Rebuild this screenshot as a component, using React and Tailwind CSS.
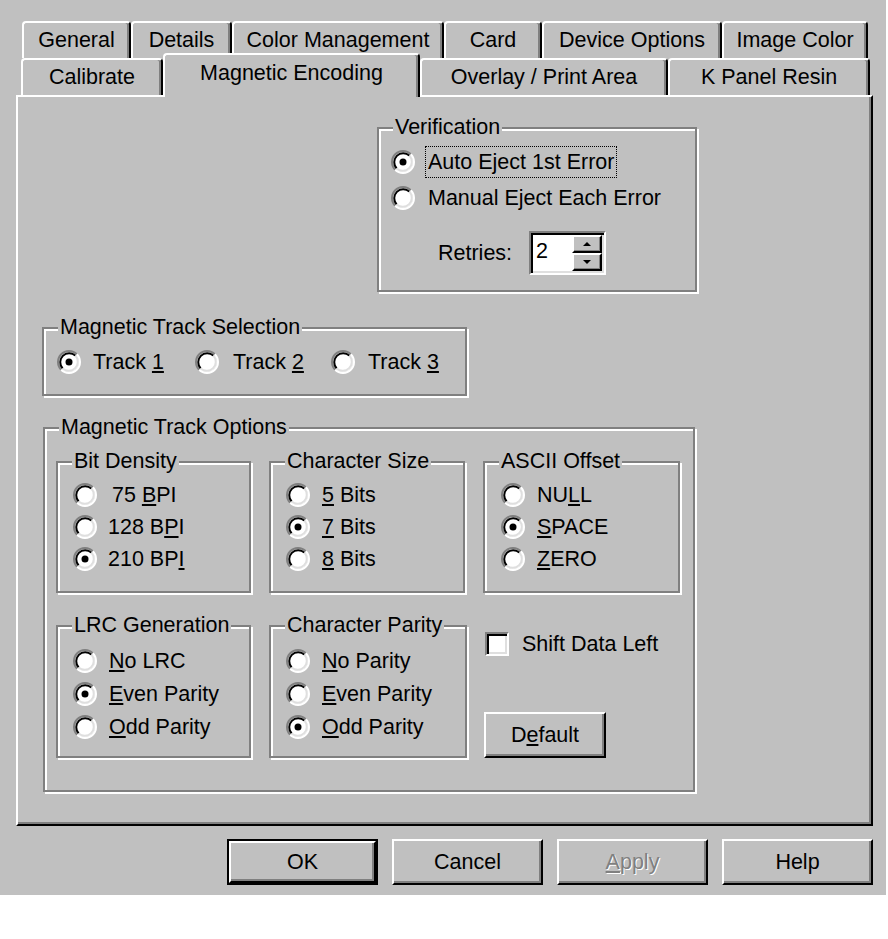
import React from 'react';

const row1 = [
  { label: 'General', w: 'w-[109px]' },
  { label: 'Details', w: 'w-[101px]' },
  { label: 'Color Management', w: 'w-[212px]' },
  { label: 'Card', w: 'w-[98px]' },
  { label: 'Device Options', w: 'w-[180px]' },
  { label: 'Image Color', w: 'w-[146px]' },
];

const row2 = [
  { label: 'Calibrate', w: 'w-[142px]' },
  { label: 'Magnetic Encoding', w: 'w-[257px]', selected: true },
  { label: 'Overlay / Print Area', w: 'w-[248px]' },
  { label: 'K Panel Resin', w: 'w-[202px]' },
];

const Radio = ({ checked }) => (
  <svg width="24" height="24" viewBox="0 0 24 24" className="shrink-0">
    <circle cx="12" cy="12" r="10" fill="#fff" />
    <path d="M4.22 19.78 A11 11 0 0 1 19.78 4.22" stroke="#808080" strokeWidth="2" fill="none" />
    <path d="M19.78 4.22 A11 11 0 0 1 4.22 19.78" stroke="#fff" strokeWidth="2" fill="none" />
    <path d="M5.64 18.36 A9 9 0 0 1 18.36 5.64" stroke="#000" strokeWidth="2" fill="none" />
    <path d="M18.36 5.64 A9 9 0 0 1 5.64 18.36" stroke="#dfdfdf" strokeWidth="2" fill="none" />
    {checked && <circle cx="12" cy="12" r="3.5" fill="#000" />}
  </svg>
);

const Option = ({ checked, children, className = 'h-[32px]', gap = 'gap-[11px]' }) => (
  <div className={`flex items-center ${gap} ${className}`}>
    <Radio checked={checked} />
    <span className="leading-[24px] whitespace-nowrap">{children}</span>
  </div>
);

const Group = ({ label, className = '', children }) => (
  <div className={`relative border-2 border-[#808080] shadow-[2px_2px_0_#fff,inset_2px_2px_0_#fff] ${className}`}>
    <span className="absolute -top-[14px] left-[14px] bg-[#c0c0c0] px-[2px] leading-[24px] whitespace-nowrap">
      {label}
    </span>
    {children}
  </div>
);

const Button = ({ children, className = '', isDefault }) => (
  <div className={`h-[46px] ${isDefault ? 'border-2 border-black' : ''} ${className}`}>
    <div className="w-full h-full flex items-center justify-center border-2 border-t-white border-l-white border-r-black border-b-black shadow-[inset_-2px_-2px_0_#808080]">
      {children}
    </div>
  </div>
);

const Tab = ({ label, w, selected }) =>
  selected ? (
    <div className={`${w} h-[44px] -mb-[2px] flex items-center justify-center pb-[6px] bg-[#c0c0c0] border-t-2 border-x-2 border-t-white border-l-white border-r-black rounded-t-[4px] shadow-[inset_-2px_0_0_#808080]`}>
      {label}
    </div>
  ) : (
    <div className={`${w} h-[37px] flex items-center justify-center bg-[#c0c0c0] border-t-2 border-x-2 border-t-white border-l-white border-r-black rounded-t-[4px] shadow-[inset_-2px_0_0_#808080]`}>
      {label}
    </div>
  );

const SpinArrow = ({ down }) => (
  <div className="flex-1 flex items-center justify-center bg-[#c0c0c0] border-2 border-t-white border-l-white border-r-black border-b-black shadow-[inset_-1px_-1px_0_#808080]">
    <svg width="8" height="4" viewBox="0 0 8 4">
      <path d={down ? 'M0 0 H8 L4 4 Z' : 'M0 4 H8 L4 0 Z'} fill="#000" />
    </svg>
  </div>
);

export default function App() {
  return (
    <div className="min-h-screen bg-white font-['Liberation_Sans',Arial,sans-serif] text-[21.5px] text-black">
      <div className="w-[886px] h-[895px] bg-[#c0c0c0] pt-[21px]">
        {/* back tab row */}
        <div className="flex ml-[22px]">
          {row1.map((t) => (
            <Tab key={t.label} {...t} />
          ))}
        </div>
        {/* front tab row */}
        <div className="relative z-10 flex items-end h-[37px] ml-[21px]">
          {row2.map((t) => (
            <Tab key={t.label} {...t} />
          ))}
        </div>

        {/* tab panel */}
        <div className="ml-[16px] w-[857px] h-[731px] border-2 border-t-white border-l-white border-r-black border-b-black shadow-[inset_-2px_-2px_0_#808080]">
          <Group label="Verification" className="ml-[359px] mt-[30px] w-[320px] h-[165px] pl-[12px] pt-[15px]">
            <div className="flex items-center gap-[10px] h-[36px]">
              <Radio checked />
              <span className="leading-[24px] px-[2px] py-[3px] border border-dotted border-black">Auto Eject 1st Error</span>
            </div>
            <div className="flex items-center gap-[10px] h-[36px]">
              <Radio />
              <span className="leading-[24px] px-[2px] border border-transparent">Manual Eject Each Error</span>
            </div>
            <div className="flex items-center mt-[15px] ml-[47px] gap-[17px]">
              <span>Retries:</span>
              <div className="flex w-[77px] h-[44px] bg-white border-2 border-t-[#808080] border-l-[#808080] border-b-white border-r-white shadow-[inset_2px_2px_0_#000,inset_-2px_-2px_0_#dfdfdf]">
                <span className="pl-[5px] pt-[6px] leading-[24px]">2</span>
                <div className="ml-auto flex flex-col w-[32px] py-[2px] pr-[2px]">
                  <SpinArrow />
                  <SpinArrow down />
                </div>
              </div>
            </div>
          </Group>

          <Group label="Magnetic Track Selection" className="ml-[24px] mt-[35px] w-[425px] h-[69px] pl-[13px] pt-[17px]">
            <div className="flex">
              <Option checked className="h-[32px] w-[138px]" gap="gap-[12px]">Track <u>1</u></Option>
              <Option className="h-[32px] w-[136px]" gap="gap-[14px]">Track <u>2</u></Option>
              <Option className="h-[32px]" gap="gap-[13px]">Track <u>3</u></Option>
            </div>
          </Group>

          <Group label="Magnetic Track Options" className="ml-[25px] mt-[31px] w-[652px] h-[365px] pl-[11px] pt-[32px]">
            <div className="flex gap-[18px]">
              <Group label="Bit Density" className="w-[195px] h-[132px] pl-[15px] pt-[16px]">
                <Option><span className="ml-[4px]">75 <u>B</u>PI</span></Option>
                <Option>128 B<u>P</u>I</Option>
                <Option checked>210 BP<u>I</u></Option>
              </Group>
              <Group label="Character Size" className="w-[196px] h-[132px] pl-[15px] pt-[16px]">
                <Option gap="gap-[12px]"><u>5</u> Bits</Option>
                <Option checked gap="gap-[12px]"><u>7</u> Bits</Option>
                <Option gap="gap-[12px]"><u>8</u> Bits</Option>
              </Group>
              <Group label="ASCII Offset" className="w-[197px] h-[132px] pl-[16px] pt-[16px]">
                <Option gap="gap-[12px]">NU<u>L</u>L</Option>
                <Option checked gap="gap-[12px]"><u>S</u>PACE</Option>
                <Option gap="gap-[12px]"><u>Z</u>ERO</Option>
              </Group>
            </div>
            <div className="flex gap-[18px] mt-[32px]">
              <Group label="LRC Generation" className="w-[195px] h-[133px] pl-[15px] pt-[17px]">
                <Option className="h-[33px]" gap="gap-[12px]"><u>N</u>o LRC</Option>
                <Option checked className="h-[33px]" gap="gap-[12px]"><u>E</u>ven Parity</Option>
                <Option className="h-[33px]" gap="gap-[12px]"><u>O</u>dd Parity</Option>
              </Group>
              <Group label="Character Parity" className="w-[198px] h-[133px] pl-[15px] pt-[17px]">
                <Option className="h-[33px]" gap="gap-[12px]"><u>N</u>o Parity</Option>
                <Option className="h-[33px]" gap="gap-[12px]"><u>E</u>ven Parity</Option>
                <Option checked className="h-[33px]" gap="gap-[12px]"><u>O</u>dd Parity</Option>
              </Group>
              <div className="flex flex-col pt-[7px]">
                <div className="flex items-center gap-[13px]">
                  <div className="w-[24px] h-[24px] bg-white border-2 border-t-[#808080] border-l-[#808080] border-b-white border-r-white shadow-[inset_2px_2px_0_#000,inset_-2px_-2px_0_#dfdfdf]" />
                  <span className="leading-[24px]">Shift Data Left</span>
                </div>
                <Button className="w-[122px] mt-[56px] -ml-[1px]">
                  D<u>e</u>fault
                </Button>
              </div>
            </div>
          </Group>
        </div>

        {/* dialog buttons */}
        <div className="flex gap-[14px] ml-[227px] mt-[13px]">
          <Button isDefault className="w-[151px]">OK</Button>
          <Button className="w-[151px]">Cancel</Button>
          <Button className="w-[151px]">
            <span className="text-[#808080] [text-shadow:1px_1px_0_#fff]"><u>A</u>pply</span>
          </Button>
          <Button className="w-[151px]">Help</Button>
        </div>
      </div>
    </div>
  );
}
